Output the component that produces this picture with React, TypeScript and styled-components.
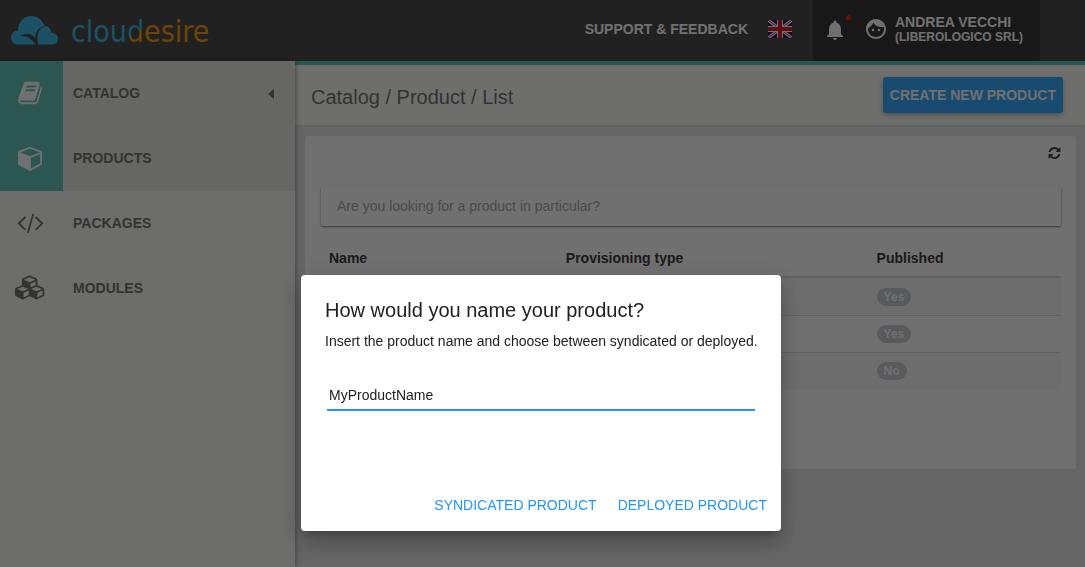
import React from 'react';
import styled, { createGlobalStyle } from 'styled-components';
import { MdFace, MdNotifications } from 'react-icons/md';
import { FaCaretLeft } from 'react-icons/fa';

const GlobalStyle = createGlobalStyle`
  * { box-sizing: border-box; }
  body {
    margin: 0;
    font-family: "Liberation Sans", Arial, sans-serif;
    font-size: 14px;
    line-height: 20px;
    color: #333;
    background: #e7e7e7;
  }
  button, input { font: inherit; }
`;

const Page = styled.div`
  display: flex;
  flex-direction: column;
  min-height: 100vh;
`;

const Header = styled.header`
  display: flex;
  align-items: center;
  height: 61px;
  padding-right: 45px;
  background: #4d4d4d;
  color: #fff;
  font-weight: bold;
`;

const Brand = styled.a`
  display: flex;
  align-items: center;
  gap: 12px;
  margin-right: auto;
  padding-left: 11px;
  text-decoration: none;
`;

const BrandName = styled.span`
  padding-top: 2px;
  font-family: "DejaVu Sans Condensed", "DejaVu Sans", sans-serif;
  font-stretch: condensed;
  font-weight: normal;
  font-size: 30px;
  line-height: 36px;
  color: #3cb8e6;
`;

const BrandSplit = styled.span`
  color: transparent;
  background: linear-gradient(145deg, #3cb8e6 54%, #f39c12 54%);
  background-clip: text;
  -webkit-background-clip: text;
`;

const BrandEnd = styled.span`
  color: #f39c12;
`;

const HeaderLink = styled.a`
  padding-bottom: 4px;
  color: #fff;
  text-decoration: none;
`;

const PlainButton = styled.button`
  display: flex;
  align-items: center;
  padding: 0;
  border: 0;
  background: none;
  color: inherit;
`;

const LanguageButton = styled(PlainButton)`
  margin: 0 21px 0 20px;
  padding-bottom: 3px;
`;

const UserArea = styled.div`
  display: flex;
  align-self: stretch;
  background: #373737;
  border-radius: 0 0 3px 3px;
`;

const BellButton = styled(PlainButton)`
  position: relative;
  padding: 0 10px 2px;
`;

const AlertDot = styled.span`
  position: absolute;
  top: 15px;
  right: 6px;
  width: 5px;
  height: 5px;
  border-radius: 50%;
  background: #ff1a1a;
`;

const UserButton = styled(PlainButton)`
  gap: 7px;
  padding: 0 17px 4px 7px;
  font-weight: bold;
  text-align: left;
`;

const UserName = styled.span`
  display: block;
  line-height: 16px;
`;

const UserCompany = styled.span`
  display: block;
  font-size: 12px;
  line-height: 14px;
`;

const Body = styled.div`
  display: flex;
  flex: 1;
`;

const Sidebar = styled.nav`
  position: relative;
  flex: 0 0 295px;
  background: #f8f8f5;
  box-shadow: 1px 0 5px rgba(0, 0, 0, 0.35);
`;

const NavItem = styled.a<{ $active?: boolean }>`
  display: flex;
  align-items: center;
  height: 65px;
  padding-right: 16px;
  color: #757575;
  background: ${(p) => (p.$active ? '#e8e8e5' : 'transparent')};
  font-weight: bold;
  text-decoration: none;
`;

const NavIcon = styled.span<{ $active?: boolean }>`
  display: flex;
  align-items: center;
  justify-content: center;
  width: 63px;
  height: 65px;
  padding: 0 3px 2px 0;
  margin-right: 10px;
  color: ${(p) => (p.$active ? '#fff' : '#757575')};
  background: ${(p) => (p.$active ? '#62c4b8' : 'transparent')};
`;

const NavLabel = styled.span`
  flex: 1;
  padding-bottom: 1px;
`;

const Main = styled.main`
  flex: 1;
  min-width: 0;
  border-top: 4px solid #62c4b8;
`;

const TitleBar = styled.div`
  display: flex;
  align-items: center;
  justify-content: space-between;
  height: 60px;
  padding: 0 22px 0 16px;
  background: #fbfbf8;
  box-shadow: 0 1px 2px rgba(0, 0, 0, 0.12);
`;

const PageTitle = styled.h1`
  margin: 0;
  padding-top: 4px;
  color: #757575;
  font-size: 20px;
  line-height: 24px;
  font-weight: normal;
`;

const CreateButton = styled.button`
  height: 36px;
  padding: 0 7px;
  border: 0;
  border-radius: 3px;
  background: #3aa8fc;
  color: #fff;
  font-weight: bold;
  box-shadow: 0 2px 5px rgba(0, 0, 0, 0.3);
`;

const Card = styled.section`
  margin: 11px 9px 0 10px;
  padding: 10px 15px 80px 16px;
  background: #fff;
  border-radius: 3px;
`;

const CardTools = styled.div`
  display: flex;
  justify-content: flex-end;
  height: 40px;
  padding-bottom: 26px;
  color: #444;
`;

const SearchInput = styled.input`
  display: block;
  width: 100%;
  height: 40px;
  padding: 0 16px;
  border: 0;
  border-radius: 2px;
  background: #fff;
  box-shadow: 0 1px 2px rgba(0, 0, 0, 0.5);
  outline: 0;
  &::placeholder { color: #aaa; opacity: 1; }
`;

const Table = styled.table`
  width: 100%;
  margin-top: 14px;
  border-collapse: separate;
  border-spacing: 0;
  table-layout: fixed;
`;

const HeadCell = styled.th<{ $width: string }>`
  width: ${(p) => p.$width};
  height: 38px;
  padding: 0 8px;
  border-bottom: 2px solid #dcdcdc;
  color: #3d3d3d;
  text-align: left;
`;

const Row = styled.tr`
  background: #fff;
  &:nth-child(odd) { background: #f8f8f8; }
  &:not(:first-child) td { border-top: 1px solid #dcdcdc; }
`;

const Cell = styled.td`
  height: 37px;
  padding: 0 8px;
`;

const Badge = styled.span`
  display: block;
  width: max-content;
  padding: 3px 7px;
  border-radius: 10px;
  background: #cacccf;
  color: #fff;
  font-size: 12px;
  line-height: 12px;
  font-weight: bold;
`;

const Backdrop = styled.div`
  position: fixed;
  inset: 0;
  display: flex;
  justify-content: center;
  align-items: flex-start;
  padding: 275px 3px 0 0;
  background: rgba(0, 0, 0, 0.56);
`;

const Dialog = styled.form`
  display: flex;
  flex-direction: column;
  width: 480px;
  max-width: 90%;
  min-height: 256px;
  background: #fff;
  border-radius: 4px;
  color: #212121;
  box-shadow: 0 7px 8px -4px rgba(0, 0, 0, 0.2), 0 13px 19px 2px rgba(0, 0, 0, 0.14),
    0 5px 24px 4px rgba(0, 0, 0, 0.12);
`;

const DialogContent = styled.div`
  flex: 1;
  padding: 23px 20px 0 24px;
`;

const DialogTitle = styled.h2`
  margin: 0 0 9px;
  font-size: 20px;
  line-height: 24px;
  font-weight: normal;
`;

const DialogText = styled.label`
  display: block;
`;

const NameInput = styled.input`
  display: block;
  width: calc(100% - 8px);
  height: 30px;
  margin: 30px 2px 0;
  padding: 0 2px;
  border: 0;
  border-bottom: 2px solid #2196f3;
  background: none;
  color: inherit;
  outline: 0;
`;

const DialogActions = styled.div`
  display: flex;
  justify-content: flex-end;
  gap: 7px;
  padding: 8px 7px;
`;

const FlatButton = styled.button`
  height: 36px;
  padding: 0 7px;
  border: 0;
  border-radius: 3px;
  background: none;
  color: #2196f3;
`;

const glyphs = {
  book: {
    box: '0 0 1792 1792', w: 26, h: 26,
    d: 'M1703 478q40 57 18 129l-275 906q-19 64-76.5 107.5t-122.5 43.5h-923q-77 0-148.5-53.5t-99.5-131.5q-24-67-2-127 0-4 3-27t4-37q1-8-3-21.5t-3-19.5q2-11 8-21t16.5-23.5 16.5-23.5q23-38 45-91.5t30-91.5q3-10 .5-30t-.5-28q3-11 17-28t17-23q21-36 42-92t25-90q1-9-2.5-32t.5-28q4-13 22-30.5t22-22.5q19-26 42.5-84.5t27.5-96.5q1-8-3-25.5t-2-26.5q2-8 9-18t18-23 17-21q8-12 16.5-30.5t15-35 16-36 19.5-32 26.5-23.5 36-11.5 47.5 5.5l-1 3q38-9 51-9h761q74 0 114 56t18 130l-274 906q-36 119-71.5 153.5t-128.5 34.5h-869q-27 0-38 15-11 16-1 43 24 70 144 70h923q29 0 56-15.5t35-41.5l300-987q7-22 5-57 38 15 59 43zm-1064 2q-4 13 2 22.5t20 9.5h608q13 0 25.5-9.5t16.5-22.5l21-64q4-13-2-22.5t-20-9.5h-608q-13 0-25.5 9.5t-16.5 22.5zm-83 256q-4 13 2 22.5t20 9.5h608q13 0 25.5-9.5t16.5-22.5l21-64q4-13-2-22.5t-20-9.5h-608q-13 0-25.5 9.5t-16.5 22.5z',
  },
  cube: {
    box: '0 0 1664 1792', w: 24, h: 26,
    d: 'M896 1629l640-349v-636l-640 233v752zm-64-865l698-254-698-254-698 254zm832-252v768q0 35-18 65t-49 47l-704 384q-28 16-61 16t-61-16l-704-384q-31-17-49-47t-18-65v-768q0-40 23-73t61-47l704-256q22-8 44-8t44 8l704 256q38 14 61 47t23 73z',
  },
  code: {
    box: '0 0 1920 1792', w: 27, h: 25,
    d: 'M617 1399l-50 50q-10 10-23 10t-23-10l-466-466q-10-10-10-23t10-23l466-466q10-10 23-10t23 10l50 50q10 10 10 23t-10 23l-393 393 393 393q10 10 10 23t-10 23zm591-1067l-373 1291q-4 13-15.5 19.5t-23.5 2.5l-62-17q-13-4-19.5-15.5t-2.5-24.5l373-1291q4-13 15.5-19.5t23.5-2.5l62 17q13 4 19.5 15.5t2.5 24.5zm657 651l-466 466q-10 10-23 10t-23-10l-50-50q-10-10-10-23t10-23l393-393-393-393q-10-10-10-23t10-23l50-50q10-10 23-10t23 10l466 466q10 10 10 23t-10 23z',
  },
  cubes: {
    box: '0 0 2304 1792', w: 31, h: 25,
    d: 'M640 1632l384-192v-314l-384 164v342zm-64-454l404-173-404-173-404 173zm1088 454l384-192v-314l-384 164v342zm-64-454l404-173-404-173-404 173zm-448-293l384-165v-266l-384 164v267zm-64-379l441-189-441-189-441 189zm1088 518v416q0 36-19 67t-52 47l-448 224q-25 14-57 14t-57-14l-448-224q-4-2-7-4-2 2-7 4l-448 224q-25 14-57 14t-57-14l-448-224q-33-16-52-47t-19-67v-416q0-38 21.5-70t56.5-48l434-186v-400q0-38 21.5-70t56.5-48l448-192q23-10 50-10t50 10l448 192q35 16 56.5 48t21.5 70v400l434 186q36 16 57 48t21 70z',
  },
  refresh: {
    box: '64 0 1664 1792', w: 13, h: 14,
    d: 'M1639 1056q0 5-1 7-64 268-268 434.5t-478 166.5q-146 0-282.5-55t-243.5-157l-129 129q-19 19-45 19t-45-19-19-45v-448q0-26 19-45t45-19h448q26 0 45 19t19 45-19 45l-137 137q71 66 161 102t187 36q134 0 250-65t186-179q11-17 53-117 8-23 30-23h192q13 0 22.5 9.5t9.5 22.5zm25-800v448q0 26-19 45t-45 19h-448q-26 0-45-19t-19-45 19-45l138-138q-148-137-349-137-134 0-250 65t-186 179q-11 17-53 117-8 23-30 23h-199q-13 0-22.5-9.5t-9.5-22.5v-7q65-268 270-434.5t480-166.5q146 0 284 55.5t245 156.5l130-129q19-19 45-19t45 19 19 45z',
  },
};

type GlyphName = keyof typeof glyphs;

const Glyph = ({ name }: { name: GlyphName }) => {
  const g = glyphs[name];
  return (
    <svg width={g.w} height={g.h} viewBox={g.box} fill="currentColor" aria-hidden="true">
      <path d={g.d} />
    </svg>
  );
};

const CloudLogo = () => (
  <svg width="48" height="30" viewBox="0 0 48 30" aria-hidden="true">
    <path
      fill="#3cb8e6"
      d="M7 28.500C3 28.500 0 25.500 0 21.500c0-4 3-7 7-7C7 6 13 0 20.500 0c6 0 11 4 13 10 3.500 0 6.500 2.500 7 7 4 0 6.500 2.500 6.500 6 0 3-2 5.500-6 5.500z"
    />
    <path
      fill="#4d4d4d"
      d="M8.500 20C16 16.500 22 18 24 22.500 24.500 15 28 10.500 35 10c-6 2-8.500 6-8.500 11l.500 8h-2.500C21 22.500 16 19.500 8.500 20z"
    />
  </svg>
);

const UkFlag = () => (
  <svg width="24" height="18" viewBox="0 0 24 18" aria-hidden="true">
    <rect width="24" height="18" fill="#1b1e80" />
    <path d="M0 0l24 18M24 0L0 18" stroke="#fff" strokeWidth="3" />
    <path d="M0 0l24 18M24 0L0 18" stroke="#dc2828" strokeWidth="1" />
    <path d="M12 0v18M0 9h24" stroke="#fff" strokeWidth="6" />
    <path d="M12 0v18M0 9h24" stroke="#d22020" strokeWidth="4" />
  </svg>
);

const navItems: { label: string; icon: GlyphName; active?: boolean; caret?: boolean }[] = [
  { label: 'CATALOG', icon: 'book', active: true, caret: true },
  { label: 'PRODUCTS', icon: 'cube', active: true },
  { label: 'PACKAGES', icon: 'code' },
  { label: 'MODULES', icon: 'cubes' },
];

const rows = ['Yes', 'Yes', 'No'];

export default function App() {
  const [name, setName] = React.useState('MyProductName');

  return (
    <>
      <GlobalStyle />
      <Page>
        <Header>
          <Brand href="#">
            <CloudLogo />
            <BrandName>
              clou<BrandSplit>d</BrandSplit><BrandEnd>esire</BrandEnd>
            </BrandName>
          </Brand>
          <HeaderLink href="#">SUPPORT &amp; FEEDBACK</HeaderLink>
          <LanguageButton aria-label="Language">
            <UkFlag />
          </LanguageButton>
          <UserArea>
            <BellButton aria-label="Notifications">
              <MdNotifications size={24} />
              <AlertDot />
            </BellButton>
            <UserButton>
              <MdFace size={24} />
              <span>
                <UserName>ANDREA VECCHI</UserName>
                <UserCompany>(LIBEROLOGICO SRL)</UserCompany>
              </span>
            </UserButton>
          </UserArea>
        </Header>
        <Body>
          <Sidebar>
            {navItems.map((item) => (
              <NavItem key={item.label} href="#" $active={item.active}>
                <NavIcon $active={item.active}>
                  <Glyph name={item.icon} />
                </NavIcon>
                <NavLabel>{item.label}</NavLabel>
                {item.caret && <FaCaretLeft size={16} />}
              </NavItem>
            ))}
          </Sidebar>
          <Main>
            <TitleBar>
              <PageTitle>Catalog / Product / List</PageTitle>
              <CreateButton>CREATE NEW PRODUCT</CreateButton>
            </TitleBar>
            <Card>
              <CardTools>
                <PlainButton aria-label="Refresh">
                  <Glyph name="refresh" />
                </PlainButton>
              </CardTools>
              <SearchInput
                aria-label="Search products"
                placeholder="Are you looking for a product in particular?"
              />
              <Table>
                <thead>
                  <tr>
                    <HeadCell $width="32%">Name</HeadCell>
                    <HeadCell $width="42%">Provisioning type</HeadCell>
                    <HeadCell $width="26%">Published</HeadCell>
                  </tr>
                </thead>
                <tbody>
                  {rows.map((published, i) => (
                    <Row key={i}>
                      <Cell />
                      <Cell />
                      <Cell>
                        <Badge>{published}</Badge>
                      </Cell>
                    </Row>
                  ))}
                </tbody>
              </Table>
            </Card>
          </Main>
        </Body>
      </Page>
      <Backdrop>
        <Dialog role="dialog" aria-labelledby="dialog-title" onSubmit={(e) => e.preventDefault()}>
          <DialogContent>
            <DialogTitle id="dialog-title">How would you name your product?</DialogTitle>
            <DialogText htmlFor="product-name">
              Insert the product name and choose between syndicated or deployed.
            </DialogText>
            <NameInput id="product-name" value={name} onChange={(e) => setName(e.target.value)} />
          </DialogContent>
          <DialogActions>
            <FlatButton type="button">SYNDICATED PRODUCT</FlatButton>
            <FlatButton type="button">DEPLOYED PRODUCT</FlatButton>
          </DialogActions>
        </Dialog>
      </Backdrop>
    </>
  );
}
